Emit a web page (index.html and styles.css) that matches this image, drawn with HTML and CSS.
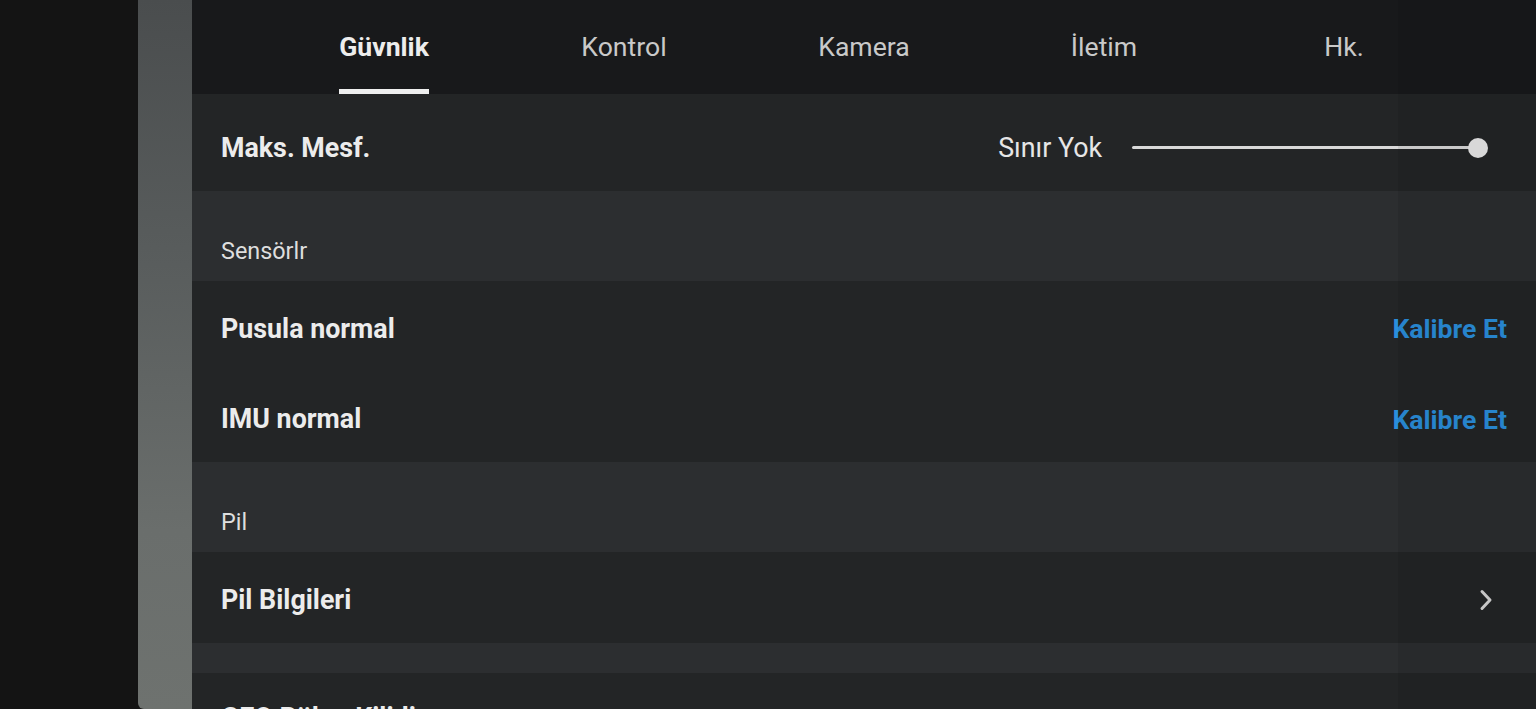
FILE: index.html
```html
<!DOCTYPE html>
<html lang="tr">
<head>
<meta charset="utf-8">
<title>Ayarlar</title>
<link rel="stylesheet" href="styles.css">
</head>
<body>
<div class="screen">
  <div class="gutter"></div>
  <div class="strip"></div>
  <div class="panel">
    <nav class="tabs">
      <div class="tab active"><span>Güvnlik</span></div>
      <div class="tab"><span>Kontrol</span></div>
      <div class="tab"><span>Kamera</span></div>
      <div class="tab"><span>İletim</span></div>
      <div class="tab"><span>Hk.</span></div>
    </nav>
    <div class="row first">
      <span class="label">Maks. Mesf.</span>
      <div class="slider-wrap">
        <span class="value">Sınır Yok</span>
        <div class="slider"><div class="track"></div><div class="thumb"></div></div>
      </div>
    </div>
    <div class="section">Sensörlr</div>
    <div class="row">
      <span class="label">Pusula normal</span>
      <span class="link">Kalibre Et</span>
    </div>
    <div class="row">
      <span class="label">IMU normal</span>
      <span class="link">Kalibre Et</span>
    </div>
    <div class="section">Pil</div>
    <div class="row">
      <span class="label">Pil Bilgileri</span>
      <svg class="chev" width="16" height="24" viewBox="0 0 16 24"><path d="M4 3.5 L12 12 L4 20.5" fill="none" stroke="#d6d6d6" stroke-width="3" stroke-linecap="round" stroke-linejoin="round"/></svg>
    </div>
    <div class="gap"></div>
    <div class="row last">
      <span class="label">GEO Bölge Kilidi</span>
      <svg class="chev up" width="16" height="24" viewBox="0 0 16 24"><path d="M4 3.5 L12 12 L4 20.5" fill="none" stroke="#d6d6d6" stroke-width="3" stroke-linecap="round" stroke-linejoin="round"/></svg>
    </div>
    <div class="shade"></div>
  </div>
</div>
</body>
</html>
```
FILE: styles.css
```css
html, body {
  margin: 0;
  padding: 0;
  background: #141414;
  overflow: hidden;
}
.screen {
  display: flex;
  width: 1536px;
  height: 709px;
  font-family: Roboto, "Noto Sans", sans-serif;
  overflow: hidden;
}
.gutter {
  width: 138px;
  flex: none;
  background: #141414;
}
.strip {
  width: 54px;
  flex: none;
  background: linear-gradient(180deg, #4a4d4e 0%, #585c5c 35%, #6a6e6c 75%, #6e726f 100%);
  border-bottom-left-radius: 6px;
}
.panel {
  position: relative;
  flex: 1;
  display: flex;
  flex-direction: column;
  background: #2c2e30;
}
.tabs {
  height: 94px;
  flex: none;
  display: flex;
  padding-left: 72px;
  background: #18191b;
}
.tab {
  width: 240px;
  display: flex;
  justify-content: center;
}
.tab span {
  display: block;
  height: 94px;
  box-sizing: border-box;
  padding-top: 30px;
  font-size: 26.6px;
  line-height: 34px;
  color: #c9c9c9;
}
.tab.active span {
  font-weight: bold;
  color: #ededed;
  border-bottom: 5px solid #efefef;
}
.row {
  height: 90px;
  flex: none;
  display: flex;
  align-items: center;
  justify-content: space-between;
  padding: 4px 29px 0 29px;
  box-sizing: border-box;
  background: #232526;
}
.row.first {
  height: 97px;
  padding-top: 10px;
  padding-right: 48px;
}
.label {
  font-size: 26.8px;
  font-weight: bold;
  color: #ececec;
}
.link {
  font-size: 26.6px;
  font-weight: bold;
  color: #2a8fdc;
}
.slider-wrap {
  display: flex;
  align-items: center;
  gap: 30px;
}
.value {
  font-size: 26.8px;
  color: #e6e6e6;
}
.slider {
  position: relative;
  width: 356px;
  height: 22px;
  display: flex;
  align-items: center;
}
.track {
  width: 346px;
  height: 3px;
  background: #d9d9d9;
  border-radius: 2px;
}
.thumb {
  position: absolute;
  right: 0;
  top: 1px;
  width: 20px;
  height: 20px;
  border-radius: 50%;
  background: #e9e9e9;
}
.section {
  height: 90px;
  flex: none;
  box-sizing: border-box;
  padding: 46px 29px 0;
  font-size: 23.4px;
  line-height: 28px;
  color: #dedede;
  background: #2c2e30;
}
.section + .row {
  height: 91px;
}
.gap {
  height: 30px;
  flex: none;
  background: #2c2e30;
}
.row.last {
  align-items: flex-start;
  padding-top: 29px;
}
.chev {
  margin-right: 13px;
}
.chev.up {
  transform: rotate(-90deg);
  margin-top: 2px;
}
.shade {
  position: absolute;
  top: 0;
  right: 0;
  width: 138px;
  height: 100%;
  background: rgba(0, 0, 0, 0.07);
  pointer-events: none;
}
```
